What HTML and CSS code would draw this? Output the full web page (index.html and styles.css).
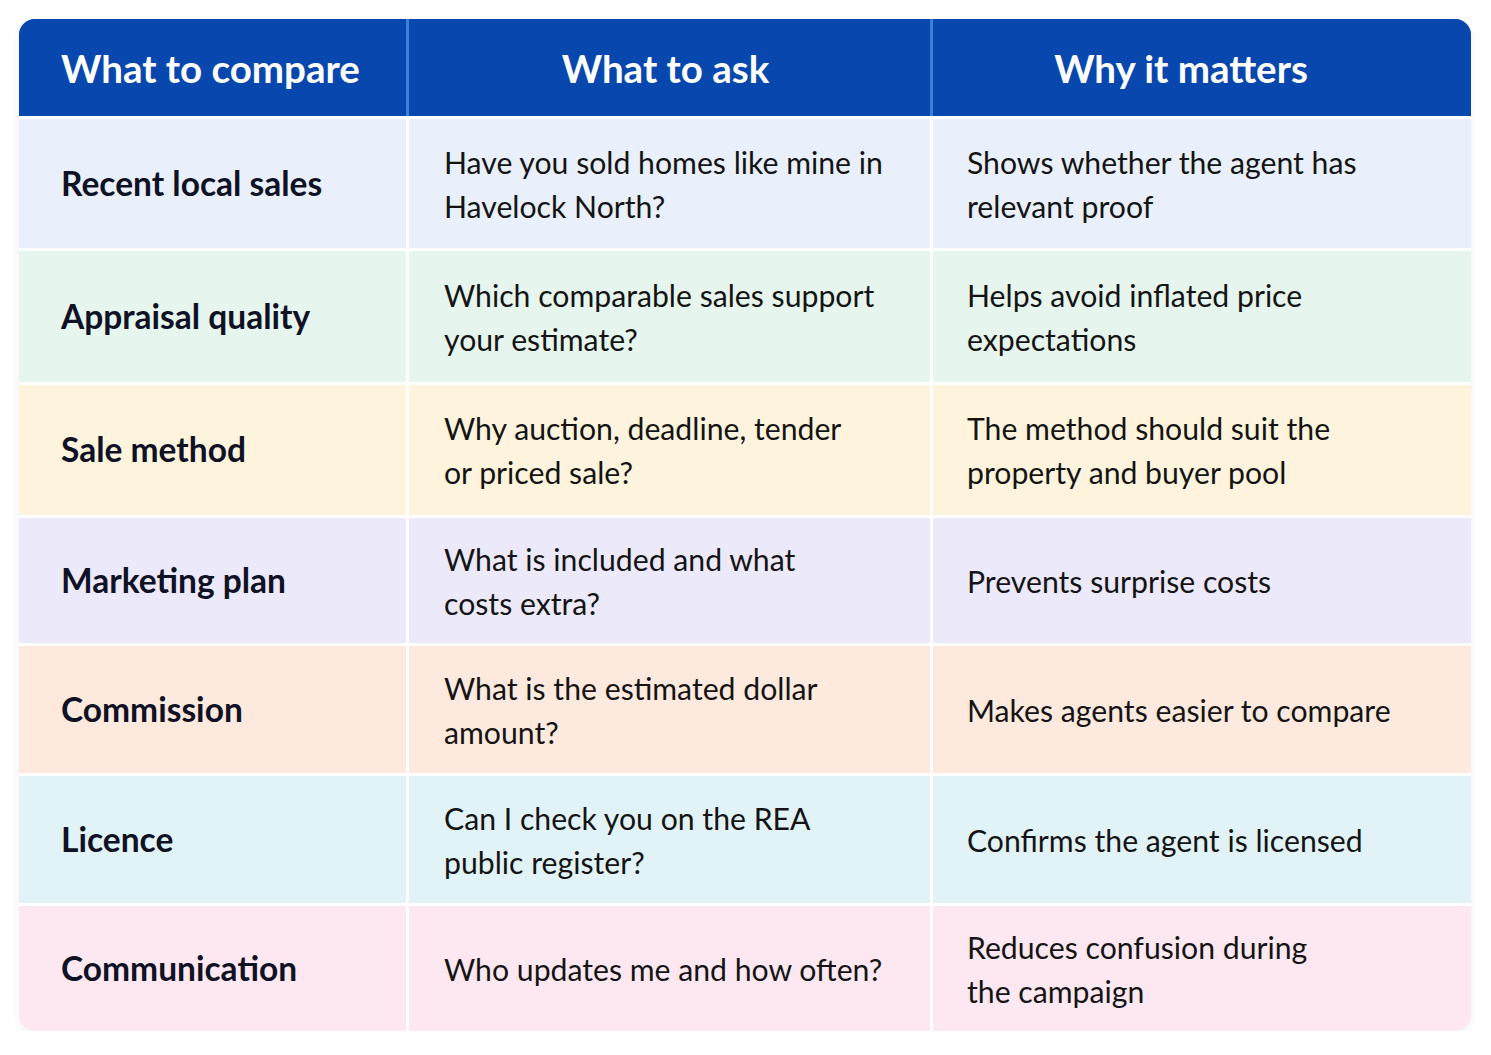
FILE: index.html
```html
<!DOCTYPE html>
<html lang="en">
<head>
<meta charset="utf-8">
<title>Agent comparison</title>
<link rel="stylesheet" href="styles.css">
</head>
<body>
<div class="table">
  <div class="thead">
    <div class="th th-left">What to compare</div>
    <div class="th th-mid">What to ask</div>
    <div class="th th-right">Why it matters</div>
  </div>
  <div class="row row-blue">
    <div class="cell label">Recent local sales</div>
    <div class="cell ask">Have you sold homes like mine in<br>Havelock North?</div>
    <div class="cell why">Shows whether the agent has<br>relevant proof</div>
  </div>
  <div class="row row-green">
    <div class="cell label">Appraisal quality</div>
    <div class="cell ask">Which comparable sales support<br>your estimate?</div>
    <div class="cell why">Helps avoid inflated price<br>expectations</div>
  </div>
  <div class="row row-yellow">
    <div class="cell label">Sale method</div>
    <div class="cell ask">Why auction, deadline, tender<br>or priced sale?</div>
    <div class="cell why">The method should suit the<br>property and buyer pool</div>
  </div>
  <div class="row row-lavender">
    <div class="cell label">Marketing plan</div>
    <div class="cell ask">What is included and what<br>costs extra?</div>
    <div class="cell why">Prevents surprise costs</div>
  </div>
  <div class="row row-peach">
    <div class="cell label">Commission</div>
    <div class="cell ask">What is the estimated dollar<br>amount?</div>
    <div class="cell why">Makes agents easier to compare</div>
  </div>
  <div class="row row-cyan">
    <div class="cell label">Licence</div>
    <div class="cell ask">Can I check you on the REA<br>public register?</div>
    <div class="cell why">Confirms the agent is licensed</div>
  </div>
  <div class="row row-pink row-last">
    <div class="cell label">Communication</div>
    <div class="cell ask">Who updates me and how often?</div>
    <div class="cell why">Reduces confusion during<br>the campaign</div>
  </div>
</div>
</body>
</html>
```
FILE: styles.css
```css
* { box-sizing: border-box; }
html, body { margin: 0; padding: 0; background: #ffffff; }
body {
  font-family: Lato, "Open Sans", "Liberation Sans", sans-serif;
  color: #13141c;
  padding: 19px 0 0 19px;
}
.table {
  width: 1452px;
  display: flex;
  flex-direction: column;
  gap: 3px;
  border-radius: 16px;
  box-shadow: 0 3px 10px rgba(30, 40, 80, 0.06);
}
.thead, .row {
  display: grid;
  grid-template-columns: 387px 521px 538px;
  column-gap: 3px;
}
.thead {
  height: 97px;
  background: #3f7fdb;
  border-radius: 16px 16px 0 0;
  overflow: hidden;
}
.th {
  background: #0747ae;
  color: #ffffff;
  font-weight: 700;
  font-size: 38.5px;
  display: flex;
  align-items: center;
  white-space: nowrap;
}
.th-left { padding-left: 42px; }
.th-mid { justify-content: center; padding-right: 8px; }
.th-right { justify-content: center; padding-right: 42px; }

.row-blue { height: 129px; }
.row-green { height: 131px; }
.row-yellow { height: 130px; }
.row-lavender { height: 125px; }
.row-peach { height: 127px; }
.row-cyan { height: 127px; }
.row-pink { height: 125px; }

.cell {
  display: flex;
  align-items: center;
  white-space: nowrap;
}
.label {
  padding-left: 42px;
  padding-bottom: 2px;
  font-size: 33.5px;
  font-weight: 700;
  color: #0f1124;
}
.ask, .why {
  font-size: 30.2px;
  line-height: 44px;
  font-weight: 400;
  color: #141414;
}
.ask { padding-left: 35px; }
.why { padding-left: 34px; }

.row-blue .cell { background: #e9f0fb; }
.row-green .cell { background: #e6f5ee; }
.row-yellow .cell { background: #fef4dd; }
.row-lavender .cell { background: #ece9fa; }
.row-peach .cell { background: #fde9dd; }
.row-cyan .cell { background: #e1f3f7; }
.row-pink .cell { background: #fde8f1; }

.row-last .cell:first-child { border-bottom-left-radius: 16px; }
.row-last .cell:last-child { border-bottom-right-radius: 16px; }
```
